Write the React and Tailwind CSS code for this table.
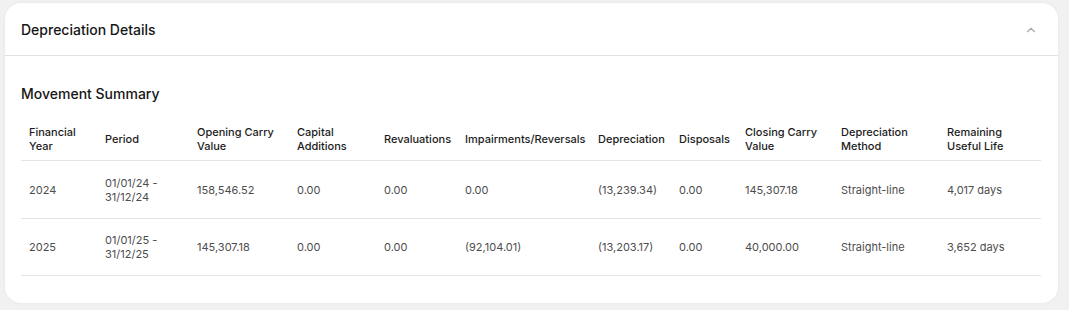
import { ChevronUp } from 'lucide-react';

const columns = [
  { label: 'Financial Year', w: 'w-[76px]' },
  { label: 'Period', w: 'w-[92px]' },
  { label: 'Opening Carry Value', w: 'w-[100px]' },
  { label: 'Capital Additions', w: 'w-[87px]' },
  { label: 'Revaluations', w: 'w-[81px]' },
  { label: 'Impairments/Reversals', w: 'w-[133px]' },
  { label: 'Depreciation', w: 'w-[81px]' },
  { label: 'Disposals', w: 'w-[66px]' },
  { label: 'Closing Carry Value', w: 'w-[96px]' },
  { label: 'Depreciation Method', w: 'w-[106px]' },
  { label: 'Remaining Useful Life', w: 'w-[102px]' },
];

const rows = [
  ['2024', '01/01/24 - 31/12/24', '158,546.52', '0.00', '0.00', '0.00', '(13,239.34)', '0.00', '145,307.18', 'Straight-line', '4,017 days'],
  ['2025', '01/01/25 - 31/12/25', '145,307.18', '0.00', '0.00', '(92,104.01)', '(13,203.17)', '0.00', '40,000.00', 'Straight-line', '3,652 days'],
];

const App = () => {
  return (
    <div className="min-h-[310px] bg-[#f1f1f1] pt-[3px] pl-[5px] pr-[11px] font-['Inter',sans-serif]">
      <div className="w-[1053px] rounded-[16px] bg-white shadow-[0_0_3px_rgba(0,0,0,0.06)] pb-[27px]">
        <div className="flex h-[53px] items-center justify-between border-b border-[#e2e2e2] pl-[16px] pr-[20px] pt-[1px]">
          <h2 className="text-[14px] font-medium text-[#161616]">Depreciation Details</h2>
          <ChevronUp className="h-[14px] w-[14px] text-[#a8a8a8]" strokeWidth={2} />
        </div>

        <div className="px-[16px] pt-[28px]">
          <h3 className="text-[14px] font-medium leading-[20px] text-[#161616]">Movement Summary</h3>

          <table className="mt-[21px] w-[1020px] table-fixed border-collapse text-[11px]">
            <thead>
              <tr className="border-b border-[#e4e4e4]">
                {columns.map((col) => (
                  <th
                    key={col.label}
                    className={`${col.w} px-[8px] pb-[7px] text-left align-middle font-medium leading-[14px] text-[#1c1c1c]`}
                  >
                    {col.label}
                  </th>
                ))}
              </tr>
            </thead>
            <tbody>
              {rows.map((row, r) => (
                <tr key={row[0]} className={`${r === 0 ? 'h-[58px]' : 'h-[57px]'} border-b border-[#e4e4e4]`}>
                  {row.map((cell, i) => (
                    <td key={i} className="px-[8px] align-middle leading-[14px] text-[#4d4d4d]">
                      {cell}
                    </td>
                  ))}
                </tr>
              ))}
            </tbody>
          </table>
        </div>
      </div>
    </div>
  );
};

export default App;
